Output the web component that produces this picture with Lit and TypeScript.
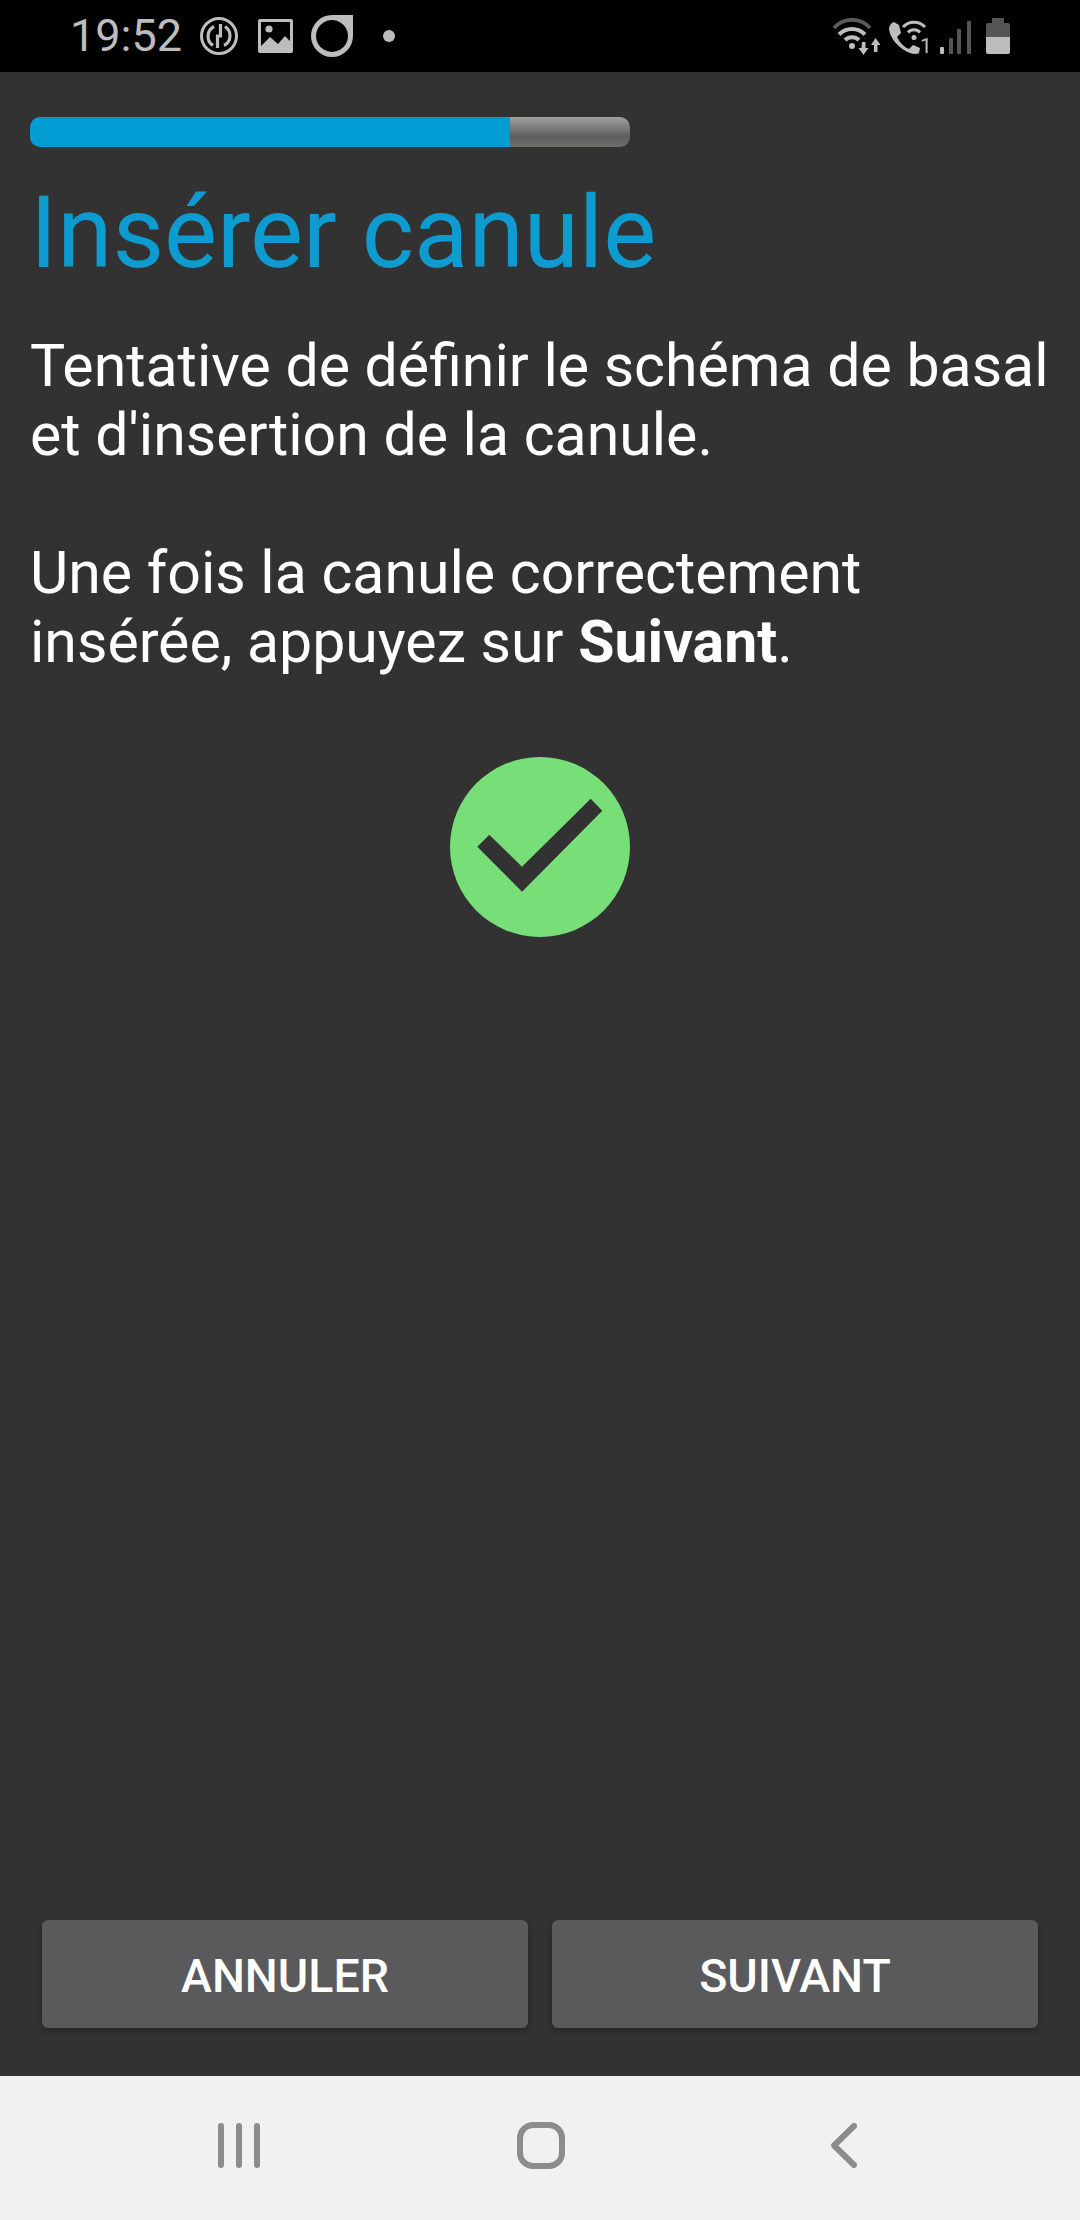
import { LitElement, html, css, svg } from 'lit';
import { customElement } from 'lit/decorators.js';

// status bar glyphs, drawn in their own pixel box (1:1 with the screenshot)
const syncIcon = svg`
  <circle cx="19" cy="19" r="17.5" fill="none" stroke="#bdbdbd" stroke-width="3"/>
  <path d="M14 9.500a11 11 0 0 0 -1 19 M24 28.500a11 11 0 0 0 1 -19" fill="none" stroke="#bdbdbd" stroke-width="3.200"/>
  <path d="M20.500 7v12h-3v12" fill="none" stroke="#bdbdbd" stroke-width="3.200"/>`;

const imageIcon = svg`
  <path fill-rule="evenodd" fill="#bdbdbd" d="M2 0h31a2 2 0 0 1 2 2v30a2 2 0 0 1 -2 2h-31a2 2 0 0 1 -2 -2v-30a2 2 0 0 1 2 -2z
    M3 3v24l9 -9 8 7 7 -8 5 5v-19z"/>
  <circle cx="11" cy="10" r="3.6" fill="#bdbdbd"/>`;

const ringIcon = svg`
  <path fill-rule="evenodd" fill="#bdbdbd" d="M21 0h21v21a21 21 0 1 1 -21 -21z
    M21 5a16 16 0 1 0 0.01 0z"/>`;

const wifiDataIcon = svg`
  <path d="M2 10a24 24 0 0 1 36 0" fill="none" stroke="#5a5a5a" stroke-width="4"/>
  <path d="M7 16.500a18 18 0 0 1 26 0 M13 22a10 10 0 0 1 14 0" fill="none" stroke="#bdbdbd" stroke-width="4"/>
  <circle cx="20" cy="28" r="3" fill="#bdbdbd"/>
  <path fill="#bdbdbd" d="M30 24h3.500v6h3l-5 7 -5 -7h3z M43.500 20l5 7h-3v7h-3.500v-7h-3z"/>`;

const callWifiIcon = svg`
  <path fill="#bdbdbd" d="M6 2L11 5 13 13 9 17C12 23 16 27 21 29L25 25 32 28 31 33C28 35 22 34 16 30 8 25 2 17 1 9 1 6 3 3 6 2z"/>
  <path d="M15 7a15 15 0 0 1 22 0 M20 12.500a8 8 0 0 1 12 0" fill="none" stroke="#bdbdbd" stroke-width="3"/>
  <circle cx="26" cy="17.500" r="2.500" fill="#bdbdbd"/>
  <text x="32" y="33" font-size="21" fill="#bdbdbd" font-family="Roboto, sans-serif">1</text>`;

const signalIcon = svg`
  <rect x="0" y="26" width="4" height="7" rx="1" fill="#bdbdbd"/>
  <rect x="9" y="17" width="4" height="16" rx="1" fill="#555"/>
  <rect x="17" y="8" width="4" height="25" rx="1" fill="#555"/>
  <rect x="27" y="0" width="4" height="33" rx="1" fill="#555"/>`;

const batteryIcon = svg`
  <path fill="#555" d="M6 0h12v5h4a2 2 0 0 1 2 2v12h-24v-12a2 2 0 0 1 2 -2h4z"/>
  <path fill="#bdbdbd" d="M0 19h24v15a2 2 0 0 1 -2 2h-20a2 2 0 0 1 -2 -2z"/>`;

@customElement('app-root')
export class AppRoot extends LitElement {
  static override styles = css`
    :host {
      display: flex;
      flex-direction: column;
      width: 1080px;
      height: 2220px;
      background: #323232;
      font-family: Roboto, 'Liberation Sans', sans-serif;
    }
    svg {
      display: block;
      flex: none;
    }
    .status-bar {
      display: flex;
      align-items: center;
      height: 72px;
      padding-left: 70px;
      background: #000;
      color: #bdbdbd;
      box-sizing: border-box;
    }
    .time {
      font-size: 45px;
      line-height: 72px;
      width: 130px;
    }
    .sync { margin-right: 20px; }
    .image { margin-right: 18px; }
    .ring { margin-right: 30px; }
    .dot {
      width: 12px;
      height: 12px;
      border-radius: 50%;
      background: #bdbdbd;
    }
    .status-right {
      display: flex;
      align-items: center;
      margin-left: auto;
      margin-right: 70px;
    }
    .wifi { margin-right: 8px; }
    .call { margin: 3px 6px -5px 0; }
    .signal { margin-right: 15px; margin-top: 3px; }
    .content {
      flex: 1;
      display: flex;
      flex-direction: column;
      padding: 45px 30px 0;
      min-height: 0;
    }
    .progress {
      display: flex;
      width: 600px;
      height: 30px;
      border-radius: 10px;
      overflow: hidden;
      flex: none;
    }
    .progress-fill {
      background: #009cd3;
    }
    .progress-rest {
      flex: 1;
      background: linear-gradient(#a0a0a0, #5e5e5c 65%, #6e6e6c);
    }
    h1 {
      margin: 27px 0 0;
      font-size: 100px;
      line-height: 118px;
      font-weight: 400;
      color: #0d9bd0;
    }
    p {
      margin: 39px 0 0;
      font-size: 59px;
      line-height: 69px;
      color: #fff;
    }
    .check {
      align-self: center;
      margin-top: 81px;
    }
    .actions {
      display: flex;
      gap: 24px;
      margin-top: auto;
      padding: 0 12px 48px;
    }
    .btn {
      flex: 1;
      height: 108px;
      border: 0;
      border-radius: 6px;
      background: #5a5a5c;
      box-shadow: 0 3px 6px rgba(0, 0, 0, 0.25);
      color: #fff;
      font-family: inherit;
      font-size: 46.5px;
      font-weight: 500;
      padding: 3px 0 0;
    }
    .nav-bar {
      display: flex;
      align-items: center;
      height: 144px;
      padding: 0 0 6px 218px;
      background: #f1f1f1;
      flex: none;
      box-sizing: border-box;
    }
    .nav-home { margin-left: 257px; }
    .nav-back { margin-left: 266px; }
  `;

  override render() {
    return html`
      <div class="status-bar">
        <span class="time">19:52</span>
        <svg class="sync" width="38" height="38" viewBox="0 0 38 38">${syncIcon}</svg>
        <svg class="image" width="35" height="34" viewBox="0 0 35 34">${imageIcon}</svg>
        <svg class="ring" width="42" height="42" viewBox="0 0 42 42">${ringIcon}</svg>
        <span class="dot"></span>
        <div class="status-right">
          <svg class="wifi" width="48" height="37" viewBox="0 0 48 37">${wifiDataIcon}</svg>
          <svg class="call" width="46" height="40" viewBox="0 0 46 40">${callWifiIcon}</svg>
          <svg class="signal" width="31" height="33" viewBox="0 0 31 33">${signalIcon}</svg>
          <svg width="24" height="36" viewBox="0 0 24 36">${batteryIcon}</svg>
        </div>
      </div>

      <div class="content">
        <div class="progress">
          <div class="progress-fill" style="width: ${(480 / 600) * 100}%"></div>
          <div class="progress-rest"></div>
        </div>
        <h1>Insérer canule</h1>
        <p>
          Tentative de définir le schéma de basal<br />
          et d'insertion de la canule.<br /><br />
          Une fois la canule correctement<br />
          insérée, appuyez sur <b>Suivant</b>.
        </p>
        <svg class="check" width="180" height="180" viewBox="0 0 180 180">
          <circle cx="90" cy="90" r="90" fill="#78df78" />
          <path d="M27.300 89.700L39.300 77.700 72 109.700 140.700 41.700 152.300 53.700 72 134.700z" fill="#323232" />
        </svg>
        <div class="actions">
          <button class="btn">ANNULER</button>
          <button class="btn">SUIVANT</button>
        </div>
      </div>

      <div class="nav-bar">
        <svg width="42" height="45" viewBox="0 0 42 45">
          <path d="M3 3v39M21 3v39M39 3v39" fill="none" stroke="#8c8c8c" stroke-width="6" stroke-linecap="round" />
        </svg>
        <svg class="nav-home" width="48" height="47" viewBox="0 0 48 47">
          <rect x="3" y="3" width="42" height="41" rx="13" fill="none" stroke="#8c8c8c" stroke-width="6" />
        </svg>
        <svg class="nav-back" width="26" height="45" viewBox="0 0 26 45">
          <path d="M23 3L3 22.500 23 42" fill="none" stroke="#8c8c8c" stroke-width="6" stroke-linecap="round" stroke-linejoin="round" />
        </svg>
      </div>
    `;
  }
}

declare global {
  interface HTMLElementTagNameMap {
    'app-root': AppRoot;
  }
}
